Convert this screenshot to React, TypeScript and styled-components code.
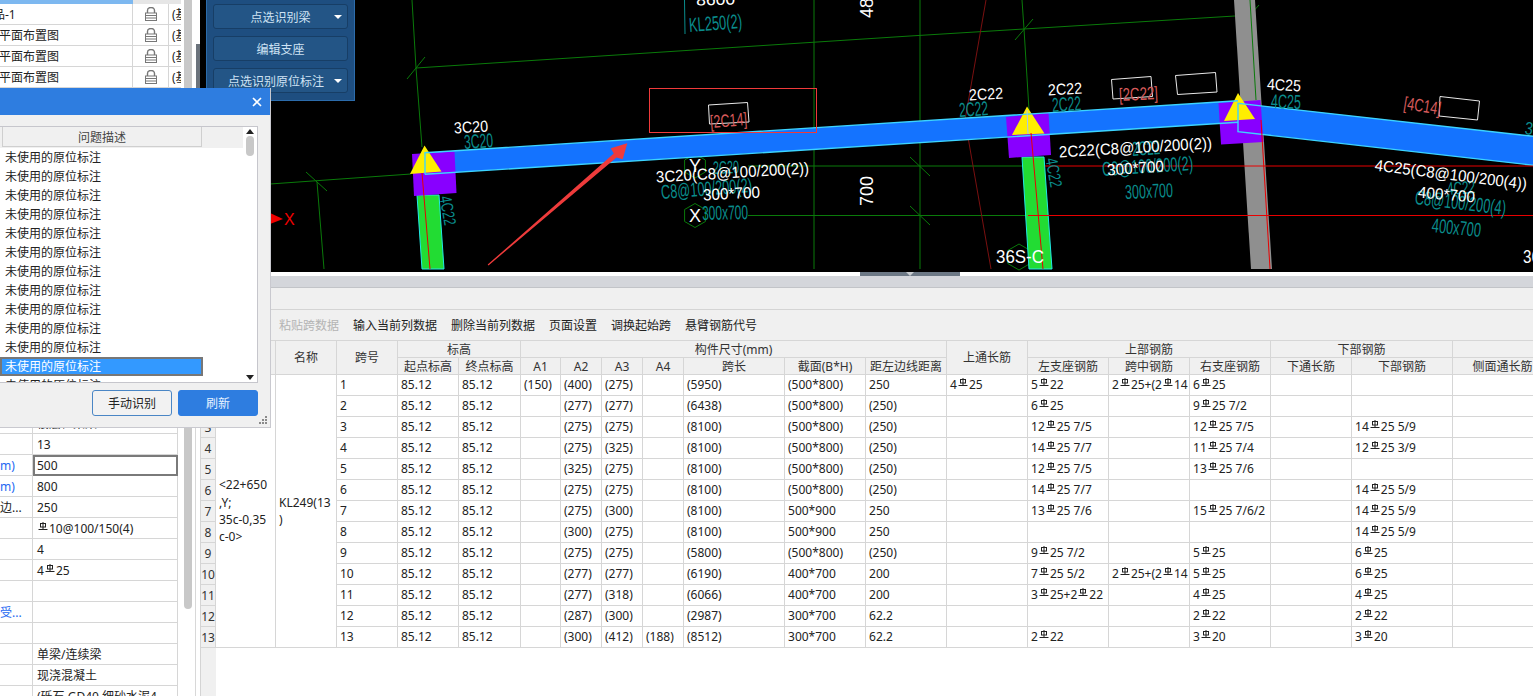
import React from "react";
import styled, { createGlobalStyle } from "styled-components";

const Global = createGlobalStyle`
  html, body { margin: 0; padding: 0; background: #fff; }
  body { font-family: "Noto Sans", "Noto Sans CJK SC", sans-serif; font-size: 12px; color: #222; }
  * { box-sizing: border-box; }
`;

const Page = styled.div`
  position: relative;
  display: grid;
  grid-template-columns: 200px 1fr;
  width: 1533px;
  height: 696px;
  overflow: hidden;
`;

/* ---------- left column ---------- */
const LeftColumn = styled.aside`
  display: flex;
  flex-direction: column;
  height: 696px;
  overflow: hidden;
  background: #fff;
`;
const TopList = styled.div`
  position: relative;
  height: 88px;
  flex: none;
  padding-right: 19px;
`;
const TopHead = styled.div`
  display: grid;
  grid-template-columns: 133px 36px 12px;
  height: 4px;
  background: #e6e6e6;
  & > span:first-child { background: #7db8f0; }
`;
const TopRow = styled.div`
  display: grid;
  grid-template-columns: 133px 36px 12px;
  height: 21px;
  border-bottom: 1px solid #d6d6d6;
  line-height: 22px;
`;
const TopName = styled.div<{ $shift: number }>`
  border-right: 1px solid #d6d6d6;
  white-space: nowrap;
  overflow: hidden;
  text-indent: ${(p) => p.$shift}px;
  color: #222;
`;
const LockCell = styled.div`
  display: flex;
  align-items: center;
  justify-content: center;
  border-right: 1px solid #d6d6d6;
`;
const ClipCell = styled.div`
  overflow: hidden;
  white-space: nowrap;
  padding-left: 3px;
`;
const TopThumb = styled.div`
  position: absolute;
  left: 184px;
  top: 0;
  width: 8px;
  height: 88px;
  background: #c8c8c8;
`;
const TopEdge = styled.div`
  position: absolute;
  left: 196px;
  top: 44px;
  width: 4px;
  height: 44px;
  background: #6b737c;
`;
const PropList = styled.div`
  position: relative;
  flex: 1;
  padding-top: 325px;
  border-right: 1px solid #fff;
  &::after {
    content: "";
    position: absolute;
    left: 195px;
    top: 0;
    bottom: 0;
    width: 1px;
    background: #d8d8d8;
  }
`;
const PropRow = styled.div`
  display: grid;
  grid-template-columns: 33px 145px;
  height: 21px;
  line-height: 22px;
`;
const PropLabel = styled.div<{ $link?: boolean }>`
  border-bottom: 1px solid #d6d6d6;
  border-right: 1px solid #d6d6d6;
  color: ${(p) => (p.$link ? "#2468f2" : "#222")};
  white-space: nowrap;
  overflow: hidden;
`;
const PropValue = styled.div<{ $active?: boolean }>`
  border-bottom: 1px solid #d6d6d6;
  border-right: 1px solid #d6d6d6;
  padding-left: 4px;
  white-space: nowrap;
  overflow: hidden;
  ${(p) => p.$active && "outline: 2px solid #7a7a7a; outline-offset: -2px; border-color: transparent;"}
`;
const PropThumb = styled.div`
  position: absolute;
  left: 184px;
  top: 0;
  width: 8px;
  height: 521px;
  border-radius: 0 0 4px 4px;
  background: #c8c8c8;
`;

/* ---------- dialog ---------- */
const Dialog = styled.section`
  position: absolute;
  left: 0;
  top: 88px;
  z-index: 5;
  width: 271px;
  height: 340px;
  display: flex;
  flex-direction: column;
  background: #f0f0f0;
  border-right: 1px solid #c9c9cf;
  border-bottom: 1px solid #c9c9cf;
`;
const DialogTitle = styled.header`
  height: 27px;
  flex: none;
  display: flex;
  align-items: center;
  justify-content: flex-end;
  padding-right: 8px;
  background: #2e7de0;
`;
const DialogBody = styled.div`
  padding: 11px 12px 0 0;
`;
const ProblemList = styled.div`
  position: relative;
  height: 257px;
  border: 1px solid #c6c6cc;
  border-left: none;
  background: #fff;
  overflow: hidden;
`;
const ProblemHead = styled.div`
  display: flex;
  height: 21px;
  width: 244px;
  background: #f0f0f0;
`;
const HeadCell = styled.div`
  margin-left: 2px;
  width: 200px;
  height: 20px;
  border: 1px solid #cfcfcf;
  border-top: none;
  text-align: center;
  line-height: 21px;
  color: #444;
`;
const ProblemRow = styled.div<{ $selected?: boolean }>`
  width: 203px;
  height: 19px;
  line-height: 20px;
  padding-left: 5px;
  color: ${(p) => (p.$selected ? "#fff" : "#222")};
  background: ${(p) => (p.$selected ? "#3399ff" : "transparent")};
  ${(p) => p.$selected && "outline: 2px solid #777; outline-offset: -2px;"}
`;
const ListScroll = styled.div`
  position: absolute;
  right: 0;
  top: 0;
  bottom: 0;
  width: 14px;
  display: flex;
  flex-direction: column;
  align-items: center;
  background: #fff;
  padding: 2px 0 2px;
`;
const ArrowUp = styled.span`
  width: 0;
  height: 0;
  border-left: 4px solid transparent;
  border-right: 4px solid transparent;
  border-bottom: 5px solid #222;
`;
const ArrowDown = styled.span`
  margin-top: auto;
  width: 0;
  height: 0;
  border-left: 4px solid transparent;
  border-right: 4px solid transparent;
  border-top: 5px solid #222;
`;
const ListThumb = styled.span`
  margin-top: 2px;
  width: 8px;
  height: 20px;
  border-radius: 4px;
  background: #c8c8c8;
`;
const DialogFooter = styled.div`
  display: flex;
  justify-content: flex-end;
  gap: 6px;
  padding-top: 7px;
`;
const DialogButton = styled.button<{ $primary?: boolean }>`
  width: 80px;
  height: 26px;
  padding: 0;
  border-radius: 3px;
  border: 1px solid ${(p) => (p.$primary ? "#2e7de0" : "#4a86c5")};
  background: ${(p) => (p.$primary ? "#2e7de0" : "#f2f2f2")};
  color: ${(p) => (p.$primary ? "#e8f2ff" : "#222")};
  font: inherit;
`;
const Grip = styled.svg`
  position: absolute;
  right: 2px;
  bottom: 2px;
`;

/* ---------- right column ---------- */
const RightColumn = styled.main`
  display: flex;
  flex-direction: column;
  height: 696px;
  min-width: 0;
`;
const CanvasArea = styled.div`
  position: relative;
  height: 272px;
  flex: none;
  background: #000;
  overflow: hidden;
`;
const Drawing = styled.svg`
  display: block;
`;
const CadText = styled.text<{ $tone: string; $size: number }>`
  font-family: "Liberation Sans", sans-serif;
  font-size: ${(p) => p.$size}px;
  fill: ${(p) => p.$tone};
`;
const CommandPanel = styled.div`
  position: absolute;
  left: 6px;
  top: 0;
  width: 149px;
  height: 101px;
  display: flex;
  flex-direction: column;
  gap: 7px;
  padding: 4px 6px 0;
  background: #1e4e80;
  border-right: 1px solid #2c6cab;
  border-bottom: 1px solid #2c6cab;
  border-left: 1px solid #2c6cab;
`;
const CommandButton = styled.div<{ $pad?: boolean }>`
  position: relative;
  height: 25px;
  flex: none;
  border: 1px solid #173e66;
  border-radius: 3px;
  background: #235586;
  color: #cfe3f4;
  line-height: 25px;
  text-align: center;
  padding-right: ${(p) => (p.$pad ? 9 : 0)}px;
`;
const Caret = styled.span`
  position: absolute;
  right: 5px;
  top: 10px;
  width: 0;
  height: 0;
  border-left: 4px solid transparent;
  border-right: 4px solid transparent;
  border-top: 4px solid #fff;
`;
const Splitter = styled.div`
  height: 4px;
  flex: none;
  background: #fff;
  display: flex;
  padding-left: 660px;
`;
const SplitHandle = styled.div`
  position: relative;
  width: 100px;
  background: #6c7885;
  &::after {
    content: "";
    position: absolute;
    left: 46px;
    top: 0;
    border-left: 4px solid transparent;
    border-right: 4px solid transparent;
    border-top: 4px solid #c8ccd0;
  }
`;
const TabBand = styled.div`
  height: 12px;
  flex: none;
  background: #d4d6db;
  border-bottom: 1px solid #c2c4c8;
`;
const BlankBand = styled.div`
  height: 22px;
  flex: none;
  background: #f0f0f0;
  border-bottom: 1px solid #d4d4d4;
`;
const Toolbar = styled.div`
  height: 30px;
  flex: none;
  display: flex;
  align-items: center;
  gap: 14px;
  padding-left: 79px;
  background: #f0f0f0;
`;
const ToolItem = styled.span<{ $off?: boolean }>`
  color: ${(p) => (p.$off ? "#b4b4b4" : "#222")};
  white-space: nowrap;
`;
const TableArea = styled.div`
  flex: 1;
  overflow: hidden;
  background: linear-gradient(to right, #f0f0f0 15px, #fff 15px);
  border-left: 1px solid #d4d4d4;
`;
const Sheet = styled.table`
  table-layout: fixed;
  width: 1352px;
  border-collapse: collapse;
  margin-left: -1px;
`;
const Th = styled.th`
  height: 17px;
  padding: 0;
  background: #f0f0f0;
  border: 1px solid #d6d6d6;
  font-weight: 400;
  color: #333;
  white-space: nowrap;
  overflow: hidden;
  line-height: 15px;
`;
const Td = styled.td`
  height: 21px;
  padding: 0 0 0 3px;
  border: 1px solid #d6d6d6;
  background: #fff;
  white-space: nowrap;
  overflow: hidden;
  line-height: 20px;
`;
const Gutter = styled.td`
  padding: 0;
  border: 1px solid #d6d6d6;
  background: #f0f0f0;
  text-align: center;
  overflow: hidden;
  color: #333;
`;
const WrapTd = styled(Td)`
  white-space: normal;
  line-height: 17.3px;
  padding-left: 3px;
`;
const RebarSvg = styled.svg`
  display: inline-block;
  width: 12px;
  height: 9px;
  vertical-align: 2px;
`;

const Rebar = () => (
  <RebarSvg viewBox="0 0 12 9" fill="none" stroke="#222" strokeWidth="1">
    <rect x="3.5" y="1.5" width="5" height="3.5" />
    <path d="M6 0v7.5M1.5 7.5h9" />
  </RebarSvg>
);

const Steel = ({ v }: { v: string }) => {
  const parts = v.split("#");
  return (
    <>
      {parts.map((p, i) => (
        <React.Fragment key={i}>
          {i > 0 && <Rebar />}
          {p}
        </React.Fragment>
      ))}
    </>
  );
};

const Lock = () => (
  <svg width="12" height="14" viewBox="0 0 12 14" fill="none" stroke="#777" strokeWidth="1">
    <path d="M2.5 6V3.5a3.5 3 0 0 1 7 0V6" strokeWidth="1.4" />
    <rect x="0.5" y="6" width="11" height="7.5" />
    <path d="M1 8.5h10M1 11h10" />
  </svg>
);

const topRows = [
  { name: "品-1", shift: -7 },
  { name: "平面布置图", shift: -1 },
  { name: "平面布置图", shift: -1 },
  { name: "平面布置图", shift: -1 },
];

const props: { l: string; v: string; link?: boolean; active?: boolean }[] = [
  { l: "", v: "楼层框架梁" },
  { l: "", v: "13" },
  { l: "m)", v: "500", link: true, active: true },
  { l: "m)", v: "800", link: true },
  { l: "边...", v: "250" },
  { l: "", v: "#10@100/150(4)" },
  { l: "", v: "4" },
  { l: "", v: "4#25" },
  { l: "", v: "" },
  { l: "受...", v: "", link: true },
  { l: "", v: "" },
  { l: "", v: "单梁/连续梁" },
  { l: "", v: "现浇混凝土" },
  { l: "", v: "(砾石 GD40 细砂水泥4" },
];

const colWidths = [15, 60, 61, 61, 61, 62, 40, 41, 41, 41, 101, 81, 81, 81, 81, 81, 81, 81, 101, 100];

const data: string[][] = [
  ["1", "85.12", "85.12", "(150)", "(400)", "(275)", "", "(5950)", "(500*800)", "250", "4#25", "5#22", "2#25+(2#14", "6#25", "", "", ""],
  ["2", "85.12", "85.12", "", "(277)", "(277)", "", "(6438)", "(500*800)", "(250)", "", "6#25", "", "9#25 7/2", "", "", ""],
  ["3", "85.12", "85.12", "", "(275)", "(275)", "", "(8100)", "(500*800)", "(250)", "", "12#25 7/5", "", "12#25 7/5", "", "14#25 5/9", ""],
  ["4", "85.12", "85.12", "", "(275)", "(325)", "", "(8100)", "(500*800)", "(250)", "", "14#25 7/7", "", "11#25 7/4", "", "12#25 3/9", ""],
  ["5", "85.12", "85.12", "", "(325)", "(275)", "", "(8100)", "(500*800)", "(250)", "", "12#25 7/5", "", "13#25 7/6", "", "", ""],
  ["6", "85.12", "85.12", "", "(275)", "(275)", "", "(8100)", "(500*800)", "(250)", "", "14#25 7/7", "", "", "", "14#25 5/9", ""],
  ["7", "85.12", "85.12", "", "(275)", "(300)", "", "(8100)", "500*900", "250", "", "13#25 7/6", "", "15#25 7/6/2", "", "14#25 5/9", ""],
  ["8", "85.12", "85.12", "", "(300)", "(275)", "", "(8100)", "500*900", "250", "", "", "", "", "", "14#25 5/9", ""],
  ["9", "85.12", "85.12", "", "(275)", "(275)", "", "(5800)", "(500*800)", "(250)", "", "9#25 7/2", "", "5#25", "", "6#25", ""],
  ["10", "85.12", "85.12", "", "(277)", "(277)", "", "(6190)", "400*700", "200", "", "7#25 5/2", "2#25+(2#14", "5#25", "", "6#25", ""],
  ["11", "85.12", "85.12", "", "(277)", "(318)", "", "(6066)", "400*700", "200", "", "3#25+2#22", "", "4#25", "", "4#25", ""],
  ["12", "85.12", "85.12", "", "(287)", "(300)", "", "(2987)", "300*700", "62.2", "", "", "", "2#22", "", "2#22", ""],
  ["13", "85.12", "85.12", "", "(300)", "(412)", "(188)", "(8512)", "300*700", "62.2", "", "2#22", "", "3#20", "", "3#20", ""],
];

/* drawing data, in page coordinates */
const WHITE = "#ffffff";
const TEAL = "#0a8c8c";
const PINK = "#d65a5a";

const labels: [string, number, number, number, number, string, number][] = [
  ["3C20", 454, 128, 488, 126, WHITE, 16],
  ["3C20", 464, 142, 493, 140, TEAL, 20],
  ["KL250(2)", 689, 25, 742, 21, TEAL, 20],
  ["8600", 696, 0, 735, -1, WHITE, 16],
  ["2C20", 713, 168, 739, 167, TEAL, 18],
  ["C8@100/200(2)", 661, 192, 752, 185, TEAL, 20],
  ["3C20(C8@100/200(2))", 656, 177, 809, 168, WHITE, 16],
  ["300x700", 702, 213, 748, 212, TEAL, 20],
  ["300*700", 703, 195, 760, 192, WHITE, 16],
  ["2C22", 959, 110, 988, 108, TEAL, 20],
  ["2C22", 969, 95, 1003, 93, WHITE, 16],
  ["2C22", 1052, 105, 1081, 103, TEAL, 20],
  ["2C22", 1048, 90, 1082, 88, WHITE, 16],
  ["4C25", 1271, 101, 1301, 102, TEAL, 20],
  ["4C25", 1267, 84, 1301, 86, WHITE, 16],
  ["2C22", 1132, 149, 1160, 147, TEAL, 20],
  ["C8@100/200(2)", 1102, 169, 1193, 163, TEAL, 20],
  ["2C22(C8@100/200(2))", 1059, 152, 1212, 143, WHITE, 16],
  ["300x700", 1125, 192, 1173, 190, TEAL, 20],
  ["300*700", 1107, 170, 1164, 166, WHITE, 16],
  ["4C22", 1447, 189, 1475, 187, TEAL, 18],
  ["C8@100/200(4)", 1415, 197, 1506, 208, TEAL, 20],
  ["400x700", 1432, 225, 1481, 230, TEAL, 20],
  ["4C25(C8@100/200(4))", 1375, 165, 1527, 184, WHITE, 16],
  ["400*700", 1418, 192, 1475, 197, WHITE, 16],
  ["[2C14]", 710, 122, 747, 119, PINK, 18],
  ["[2C22]", 1119, 95, 1158, 93, PINK, 18],
  ["[4C14]", 1404, 103, 1441, 109, PINK, 18],
  ["4C22", 445, 196, 450, 225, TEAL, 17],
  ["4C22", 1051, 158, 1056, 187, TEAL, 17],
  ["3", 1525, 128, 1533, 129, TEAL, 18],
  ["36S-C", 996, 257, 1044, 257, WHITE, 18],
  ["36S", 1523, 257, 1550, 257, WHITE, 18],
];

const CadLabel = ({ l }: { l: (typeof labels)[number] }) => {
  const [t, x1, y1, x2, y2, tone, size] = l;
  const angle = (Math.atan2(y2 - y1, x2 - x1) * 180) / Math.PI;
  const len = Math.hypot(x2 - x1, y2 - y1);
  return (
    <CadText
      $tone={tone}
      $size={size}
      x={x1}
      y={y1}
      dominantBaseline="central"
      textLength={len}
      lengthAdjust="spacingAndGlyphs"
      transform={`rotate(${angle} ${x1} ${y1})`}
    >
      {t}
    </CadText>
  );
};

const hexagon = (cx: number, cy: number, r: number) =>
  [0, 1, 2, 3, 4, 5]
    .map((i) => {
      const a = (Math.PI / 3) * i + Math.PI / 6;
      return `${cx + r * Math.cos(a)},${cy + r * Math.sin(a)}`;
    })
    .join(" ");

const CadDrawing = () => (
  <Drawing width="1333" height="272" viewBox="200 0 1333 272">
    <g stroke="#0a7a0a" strokeWidth="1" fill="none">
      <polyline points="416,68 910,36 1024,29 1251,15" />
      <polyline points="412,0 416,68 422,147" />
      <line x1="407" y1="79" x2="425" y2="57" />
      <line x1="270" y1="184" x2="411" y2="174" />
      <line x1="306" y1="172" x2="327" y2="191" />
      <line x1="317" y1="182" x2="324" y2="269" />
      <line x1="814" y1="0" x2="814" y2="269" />
      <line x1="920" y1="0" x2="920" y2="269" />
      <line x1="910" y1="157" x2="930" y2="176" />
      <line x1="910" y1="206" x2="930" y2="225" />
      <polyline points="1022,0 1024,29 1029,110" />
      <line x1="1015" y1="40" x2="1033" y2="19" />
      <line x1="1241" y1="25" x2="1259" y2="5" />
      <line x1="748" y1="166" x2="1022" y2="166" />
      <line x1="748" y1="215.5" x2="1028" y2="215.5" />
      <polygon points={hexagon(695, 166, 12)} />
      <polygon points={hexagon(695, 215.5, 12)} />
      <polygon points={hexagon(1019, 257, 13)} />
    </g>
    <line x1="684.5" y1="0" x2="685" y2="34" stroke={TEAL} />
    <polyline points="986,0 965,120 991,269" fill="none" stroke="#7a1010" />
    <polygon points="1234,0 1255,0 1272,269 1251,269" fill="#8f8f8f" />
    <line x1="1250" y1="0" x2="1256" y2="100" stroke="#0a7a0a" />
    <polygon points="417,195 439,195 444,269 422,269" fill="#22dc33" stroke="#22e8e8" strokeWidth="1" />
    <polygon points="1022,157 1044,157 1052,269 1029,269" fill="#22dc33" stroke="#22e8e8" strokeWidth="1" />
    <polygon points="425,152.7 1238,100.7 1238,122.3 425,174.3" fill="#1473ff" />
    <polygon points="1238,103.3 1540,137 1540,166 1238,131.7" fill="#1473ff" />
    <polygon points="412,154 454.5,151.5 456.5,193 414,196" fill="#8800ff" />
    <polygon points="1006,117 1048.5,113 1051,155 1009,158" fill="#8800ff" />
    <polygon points="1218.5,103 1260.5,100 1263.5,142 1221,144.5" fill="#8800ff" />
    <polygon points="424.5,145.5 410,174 441.5,171.5" fill="#ffee00" />
    <polygon points="1027,106.5 1012,135 1044.5,133.5" fill="#ffee00" />
    <polygon points="1238,93 1224,121 1255,119" fill="#ffee00" />
    <g fill="none" stroke="#3cd4ff" strokeWidth="1.4">
      <polyline points="425,174.3 425,152.7 1238,100.7" />
      <polyline points="425,174.3 1238,122.3" />
      <polyline points="1238,122.3 1238,103.3 1540,137" />
      <polyline points="1238,122 1238,131.7 1540,166" />
    </g>
    <line x1="1027" y1="110" x2="1028" y2="134" stroke="#9fc4ff" />
    <g stroke="#e80000" strokeWidth="1" fill="none">
      <line x1="1045" y1="166" x2="1533" y2="166" />
      <line x1="1028" y1="215.5" x2="1533" y2="215.5" />
      <line x1="422" y1="173" x2="430" y2="269" />
      <line x1="1031" y1="133" x2="1043" y2="269" />
      <line x1="1261" y1="120" x2="1270" y2="269" />
    </g>
    <g fill="none" stroke="#e8e8e8" strokeWidth="1">
      <polygon points="708.5,105 747.5,102.5 749,122 709.5,124" />
      <polygon points="1111.5,79.5 1151,76.5 1152.5,96.5 1113,99" />
      <polygon points="1175.5,75.5 1215.5,72.5 1217,92 1177.5,94.5" />
      <polygon points="1440,96.5 1479.5,101 1477.5,120 1439,116" />
    </g>
    {labels.map((l, i) => (
      <CadLabel key={i} l={l} />
    ))}
    <CadText $tone={WHITE} $size={18} x={695} y={166} textAnchor="middle" dominantBaseline="central">
      Y
    </CadText>
    <CadText $tone={WHITE} $size={18} x={695} y={216} textAnchor="middle" dominantBaseline="central">
      X
    </CadText>
    <CadText $tone={WHITE} $size={18} x={867} y={8} textAnchor="middle" dominantBaseline="central" transform="rotate(-90 867 8)">
      48
    </CadText>
    <CadText $tone={WHITE} $size={18} x={867} y={191} textAnchor="middle" dominantBaseline="central" transform="rotate(-90 867 191)">
      700
    </CadText>
    <polygon points="270,213 283,219 270,224" fill="#f00000" />
    <CadText $tone="#f00000" $size={16} x={284} y={219} dominantBaseline="central">
      X
    </CadText>
    <rect x="649.5" y="88.5" width="167" height="44" fill="none" stroke="#f03a3a" strokeWidth="1" />
    <polygon
      points="487.7,264.6 488.5,265.4 616.5,157.6 622.7,159.3 627.3,143.3 610.7,148.3 613.8,153.4"
      fill="#ee3b3b"
    />
  </Drawing>
);

export default function App() {
  return (
    <Page>
      <Global />
      <LeftColumn>
        <TopList>
          <TopHead>
            <span />
            <span />
            <span />
          </TopHead>
          {topRows.map((r, i) => (
            <TopRow key={i}>
              <TopName $shift={r.shift}>{r.name}</TopName>
              <LockCell>
                <Lock />
              </LockCell>
              <ClipCell>(基础</ClipCell>
            </TopRow>
          ))}
          <TopThumb />
          <TopEdge />
        </TopList>
        <PropList>
          <PropThumb />
          {props.map((p, i) => (
            <PropRow key={i}>
              <PropLabel $link={p.link}>{p.l}</PropLabel>
              <PropValue $active={p.active}>
                <Steel v={p.v} />
              </PropValue>
            </PropRow>
          ))}
        </PropList>
      </LeftColumn>

      <RightColumn>
        <CanvasArea>
          <CadDrawing />
          <CommandPanel>
            <CommandButton>
              点选识别梁
              <Caret />
            </CommandButton>
            <CommandButton>编辑支座</CommandButton>
            <CommandButton $pad>
              点选识别原位标注
              <Caret />
            </CommandButton>
          </CommandPanel>
        </CanvasArea>
        <Splitter>
          <SplitHandle />
        </Splitter>
        <TabBand />
        <BlankBand />
        <Toolbar>
          <ToolItem $off>粘贴跨数据</ToolItem>
          <ToolItem>输入当前列数据</ToolItem>
          <ToolItem>删除当前列数据</ToolItem>
          <ToolItem>页面设置</ToolItem>
          <ToolItem>调换起始跨</ToolItem>
          <ToolItem>悬臂钢筋代号</ToolItem>
        </Toolbar>
        <TableArea>
          <Sheet>
            <colgroup>
              {colWidths.map((w, i) => (
                <col key={i} width={w} />
              ))}
            </colgroup>
            <thead>
              <tr>
                <Th rowSpan={2} />
                <Th rowSpan={2}>位置</Th>
                <Th rowSpan={2}>名称</Th>
                <Th rowSpan={2}>跨号</Th>
                <Th colSpan={2}>标高</Th>
                <Th colSpan={7}>构件尺寸(mm)</Th>
                <Th rowSpan={2}>上通长筋</Th>
                <Th colSpan={3}>上部钢筋</Th>
                <Th colSpan={2}>下部钢筋</Th>
                <Th />
              </tr>
              <tr>
                <Th>起点标高</Th>
                <Th>终点标高</Th>
                <Th>A1</Th>
                <Th>A2</Th>
                <Th>A3</Th>
                <Th>A4</Th>
                <Th>跨长</Th>
                <Th>截面(B*H)</Th>
                <Th>距左边线距离</Th>
                <Th>左支座钢筋</Th>
                <Th>跨中钢筋</Th>
                <Th>右支座钢筋</Th>
                <Th>下通长筋</Th>
                <Th>下部钢筋</Th>
                <Th>侧面通长筋</Th>
              </tr>
            </thead>
            <tbody>
              {data.map((row, r) => (
                <tr key={r}>
                  <Gutter>{r + 1}</Gutter>
                  {r === 0 && (
                    <>
                      <WrapTd rowSpan={13}>
                        &lt;22+650
                        <br />
                        ,Y;
                        <br />
                        35c-0,35
                        <br />
                        c-0&gt;
                      </WrapTd>
                      <WrapTd rowSpan={13}>
                        KL249(13
                        <br />)
                      </WrapTd>
                    </>
                  )}
                  {row.map((c, i) => (
                    <Td key={i}>
                      <Steel v={c} />
                    </Td>
                  ))}
                </tr>
              ))}
            </tbody>
          </Sheet>
        </TableArea>
      </RightColumn>

      <Dialog>
        <DialogTitle>
          <svg width="10" height="10" viewBox="0 0 10 10" stroke="#fff" strokeWidth="1.6">
            <path d="M1 1l8 8M9 1l-8 8" />
          </svg>
        </DialogTitle>
        <DialogBody>
          <ProblemList>
            <ProblemHead>
              <HeadCell>问题描述</HeadCell>
            </ProblemHead>
            {Array.from({ length: 13 }).map((_, i) => (
              <ProblemRow key={i} $selected={i === 11}>
                未使用的原位标注
              </ProblemRow>
            ))}
            <ListScroll>
              <ArrowUp />
              <ListThumb />
              <ArrowDown />
            </ListScroll>
          </ProblemList>
          <DialogFooter>
            <DialogButton>手动识别</DialogButton>
            <DialogButton $primary>刷新</DialogButton>
          </DialogFooter>
        </DialogBody>
        <Grip width="9" height="9" viewBox="0 0 9 9" fill="#8a8a8a">
          <rect x="6" y="0" width="2" height="2" />
          <rect x="3" y="3" width="2" height="2" />
          <rect x="6" y="3" width="2" height="2" />
          <rect x="0" y="6" width="2" height="2" />
          <rect x="3" y="6" width="2" height="2" />
          <rect x="6" y="6" width="2" height="2" />
        </Grip>
      </Dialog>
    </Page>
  );
}
